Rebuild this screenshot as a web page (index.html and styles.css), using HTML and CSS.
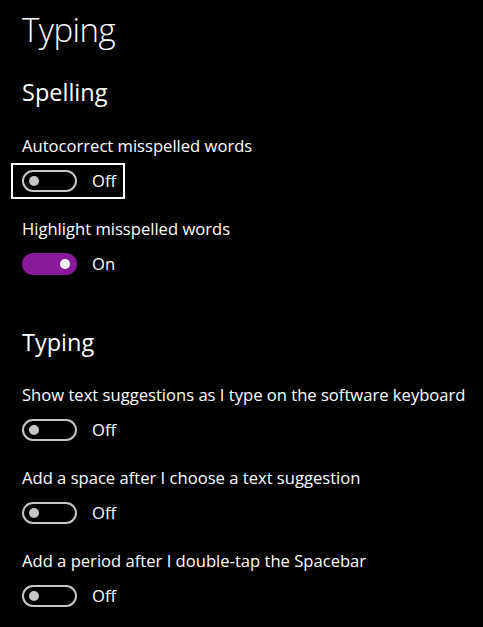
FILE: index.html
```html
<!DOCTYPE html>
<html lang="en">
<head>
<meta charset="utf-8">
<title>Typing</title>
<link rel="stylesheet" href="styles.css">
</head>
<body>
<main class="page">
  <h1 class="page-title">Typing</h1>

  <section class="group group-spelling">
    <h2 class="group-title">Spelling</h2>
    <div class="setting">
      <div class="setting-label">Autocorrect misspelled words</div>
      <div class="switch is-focused">
        <span class="track"><span class="thumb"></span></span>
        <span class="state">Off</span>
      </div>
    </div>
    <div class="setting">
      <div class="setting-label">Highlight misspelled words</div>
      <div class="switch is-on">
        <span class="track"><span class="thumb"></span></span>
        <span class="state">On</span>
      </div>
    </div>
  </section>

  <section class="group group-typing">
    <h2 class="group-title">Typing</h2>
    <div class="setting">
      <div class="setting-label">Show text suggestions as I type on the software keyboard</div>
      <div class="switch">
        <span class="track"><span class="thumb"></span></span>
        <span class="state">Off</span>
      </div>
    </div>
    <div class="setting">
      <div class="setting-label">Add a space after I choose a text suggestion</div>
      <div class="switch">
        <span class="track"><span class="thumb"></span></span>
        <span class="state">Off</span>
      </div>
    </div>
    <div class="setting">
      <div class="setting-label">Add a period after I double-tap the Spacebar</div>
      <div class="switch">
        <span class="track"><span class="thumb"></span></span>
        <span class="state">Off</span>
      </div>
    </div>
  </section>
</main>
</body>
</html>
```

FILE: styles.css
```css
html, body {
  margin: 0;
  padding: 0;
  background: #000;
  color: #fff;
}

body {
  font-family: "Open Sans", "Noto Sans", sans-serif;
  -webkit-font-smoothing: antialiased;
}

.page {
  display: flex;
  flex-direction: column;
  padding: 10px 0 0 22px;
}

.page-title {
  margin: 0;
  font-size: 33px;
  font-weight: 300;
  line-height: 40px;
  letter-spacing: -0.5px;
}

.group {
  display: flex;
  flex-direction: column;
}

.group-spelling {
  margin-top: 26px;
}

.group-typing {
  margin-top: 24px;
}

.group-title {
  margin: 0 0 28px;
  font-size: 23.5px;
  font-weight: 400;
  line-height: 32px;
}

.group-typing .group-title {
  margin-bottom: 27px;
}

.setting {
  display: flex;
  flex-direction: column;
  align-items: flex-start;
  gap: 9px;
  margin-bottom: 22px;
}

.setting-label {
  font-size: 16.6px;
  line-height: 20px;
  white-space: nowrap;
}

.switch {
  display: inline-flex;
  align-items: center;
  gap: 15px;
  padding: 5px 7px 5px 9px;
  margin-left: -9px;
}

.switch.is-focused {
  outline: 2px solid #fff;
}

.track {
  box-sizing: border-box;
  width: 55px;
  height: 22px;
  border: 2px solid #c6c6c6;
  border-radius: 11px;
  display: flex;
  align-items: center;
  padding: 0 5px;
}

.thumb {
  width: 10px;
  height: 10px;
  border-radius: 50%;
  background: #c6c6c6;
}

.switch.is-on .track {
  background: #8a1a9c;
  border-color: #8a1a9c;
  justify-content: flex-end;
}

.switch.is-on .thumb {
  background: #fff;
}

.state {
  font-size: 16.6px;
  line-height: 20px;
}
```
